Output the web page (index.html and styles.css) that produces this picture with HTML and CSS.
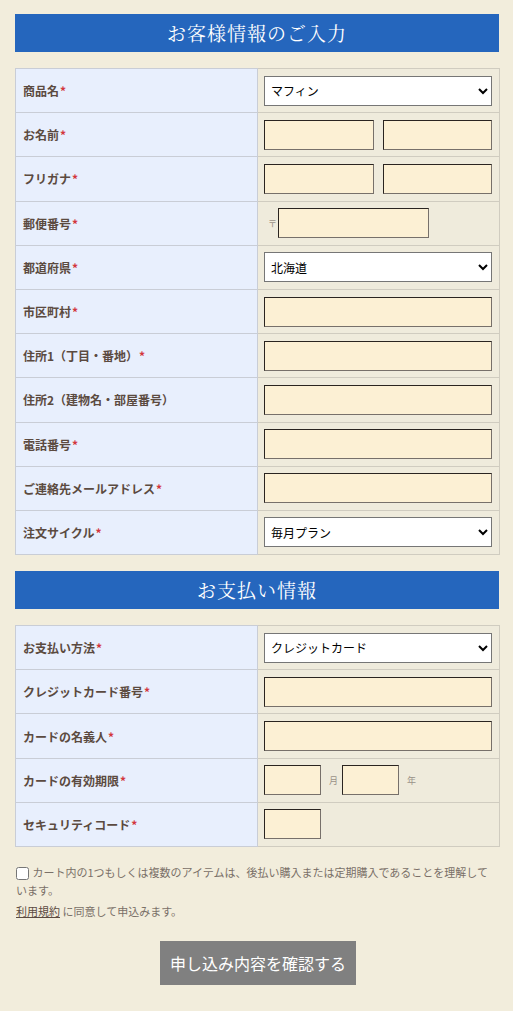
FILE: index.html
```html
<!DOCTYPE html>
<html lang="ja">
<head>
<meta charset="utf-8">
<link rel="stylesheet" href="styles.css">
</head>
<body>
<div class="wrap">
  <h2 class="sec-title">お客様情報のご入力</h2>
  <table class="form">
    <tr><th>商品名<span class="req">*</span></th><td><select class="sel"><option>マフィン</option></select></td></tr>
    <tr><th>お名前<span class="req">*</span></th><td><div class="pair"><input class="inp half"><input class="inp half"></div></td></tr>
    <tr><th>フリガナ<span class="req">*</span></th><td><div class="pair"><input class="inp half"><input class="inp half"></div></td></tr>
    <tr><th>郵便番号<span class="req">*</span></th><td><div class="zip"><span class="unit">〒</span><input class="inp zipin"></div></td></tr>
    <tr><th>都道府県<span class="req">*</span></th><td><select class="sel"><option>北海道</option></select></td></tr>
    <tr><th>市区町村<span class="req">*</span></th><td><input class="inp"></td></tr>
    <tr><th>住所1（丁目・番地）<span class="req">*</span></th><td><input class="inp"></td></tr>
    <tr><th>住所2（建物名・部屋番号）</th><td><input class="inp"></td></tr>
    <tr><th>電話番号<span class="req">*</span></th><td><input class="inp"></td></tr>
    <tr><th>ご連絡先メールアドレス<span class="req">*</span></th><td><input class="inp"></td></tr>
    <tr><th>注文サイクル<span class="req">*</span></th><td><select class="sel"><option>毎月プラン</option></select></td></tr>
  </table>

  <h2 class="sec-title">お支払い情報</h2>
  <table class="form">
    <tr><th>お支払い方法<span class="req">*</span></th><td><select class="sel"><option>クレジットカード</option></select></td></tr>
    <tr><th>クレジットカード番号<span class="req">*</span></th><td><input class="inp"></td></tr>
    <tr><th>カードの名義人<span class="req">*</span></th><td><input class="inp"></td></tr>
    <tr><th>カードの有効期限<span class="req">*</span></th><td><div class="exp"><input class="inp small"><span class="unit">月</span><input class="inp small"><span class="unit">年</span></div></td></tr>
    <tr><th>セキュリティコード<span class="req">*</span></th><td><input class="inp small"></td></tr>
  </table>

  <div class="agree">
    <p><input type="checkbox" class="chk"> カート内の1つもしくは複数のアイテムは、後払い購入または定期購入であることを理解しています。</p>
    <p class="terms-line"><a class="terms" href="#">利用規約</a> に同意して申込みます。</p>
  </div>

  <div class="actions">
    <button class="submit">申し込み内容を確認する</button>
  </div>
</div>
</body>
</html>
```

FILE: styles.css
```css
* { box-sizing: border-box; }
html, body {
  margin: 0;
  padding: 0;
  background: #f2eddc;
  font-family: "Noto Sans CJK JP", "Noto Sans", sans-serif;
}
.wrap {
  width: 485px;
  margin: 0 0 0 15px;
  padding-top: 14px;
  padding-bottom: 24px;
}
.sec-title {
  margin: 0 1px 16px 0;
  height: 38px;
  background: #2566bd;
  color: #fff;
  font-family: "Noto Serif CJK JP", "Noto Sans CJK JP", serif;
  font-weight: normal;
  font-size: 19px;
  line-height: 38px;
  text-align: center;
  letter-spacing: 1px;
}
.form {
  width: 485px;
  border-collapse: collapse;
  margin-bottom: 16px;
}
.form th, .form td {
  border: 1px solid #d0ccc0;
  height: 44.2px;
  padding: 0;
}
.form th {
  width: 242px;
  background: #e8effd;
  border-color: #c9cdd6;
  text-align: left;
  padding-left: 7px;
  font-size: 12px;
  font-weight: bold;
  color: #5b4a40;
}
.form td {
  background: #efebdc;
  padding: 0 7px 0 6px;
}
.req {
  color: #d3363c;
  margin-left: 1px;
}
.sel {
  display: block;
  width: 228px;
  height: 30px;
  border: 1px solid #767676;
  background: #fff;
  font-family: inherit;
  font-size: 12px;
  color: #000;
  padding: 0 2px;
}
.inp {
  display: block;
  width: 228px;
  height: 30px;
  border: 1px solid #2a2420;
  border-right-color: #77706a;
  border-bottom-color: #77706a;
  background: #fcf0d4;
  font-family: inherit;
  font-size: 12px;
  padding: 0 4px;
  margin: 0;
}
.pair {
  display: flex;
  gap: 9px;
}
.inp.half { width: 110px; }
.pair .inp.half:last-child { width: 109px; }
.zip, .exp {
  display: flex;
  align-items: center;
}
.unit {
  font-size: 9px;
  color: #9a9288;
}
.zip .unit { width: 14px; padding-left: 4px; }
.inp.zipin { width: 151px; }
.inp.small { width: 57px; }
.exp .unit { width: 21px; padding-left: 8px; }
.agree {
  margin-top: 5px;
  padding-left: 1px;
  padding-right: 8px;
  font-size: 11px;
  color: #7a7068;
  line-height: 18px;
}
.agree p { margin: 0; }
.agree .terms-line { margin-top: 3px; }
.chk {
  width: 13px;
  height: 13px;
  margin: 0 1px 0 0;
  vertical-align: -3px;
}
.terms {
  color: #5b4a40;
  text-decoration: underline;
}
.actions {
  margin-top: 21px;
  display: flex;
  justify-content: center;
  padding-left: 1px;
}
.submit {
  width: 196px;
  height: 44px;
  border: 0;
  background: #808080;
  color: #fff;
  font-family: inherit;
  font-size: 16px;
  cursor: pointer;
}
```
